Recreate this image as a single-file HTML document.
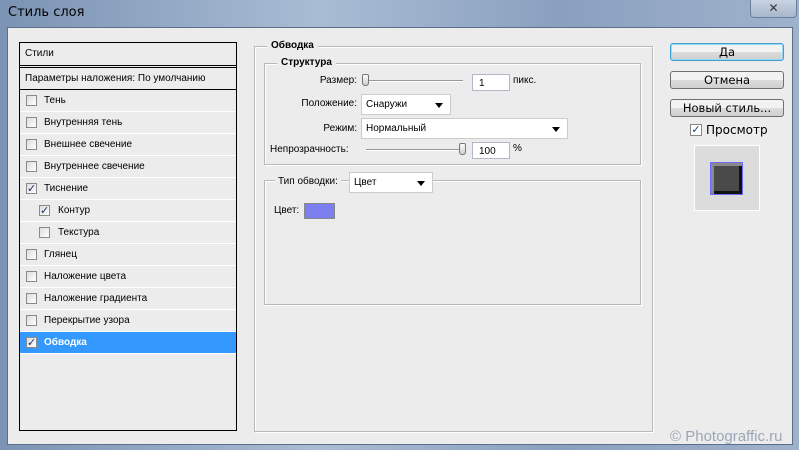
<!DOCTYPE html>
<html><head><meta charset="utf-8"><style>
*{margin:0;padding:0;box-sizing:border-box}
body{width:799px;height:450px;overflow:hidden;position:relative;font-family:"Liberation Sans","DejaVu Sans",sans-serif;font-size:11px;color:#000;background:linear-gradient(90deg,#7b93b4,#a9bcd4 40%,#8aa0bf 70%,#9fb2cc)}
.a{position:absolute}
.title{left:8px;top:5px;font-size:13px;font-family:"DejaVu Sans",sans-serif;color:#000}
.win{left:7px;top:27px;width:786px;height:418px;background:#ececec;border:1px solid #5d6f88}
.list{left:19px;top:42px;width:218px;height:389px;border:1px solid #000;background:#ececec}
.row{position:absolute;left:0;width:216px;height:22px;border-bottom:1px solid #fff;line-height:21px;padding-left:24px;font-size:10px}
.cb{position:absolute;left:6px;top:5px;width:11px;height:11px;border:1px solid #8a8a8a;background:linear-gradient(135deg,#ddd,#fff)}
.cb.k::after{content:"✓";position:absolute;left:0px;top:-5px;font-size:11px;color:#1a2d6a;font-weight:bold}
.grp{border:1px solid #b8b8b8;box-shadow:1px 1px 0 #fff inset,1px 1px 0 #fff}
.lg{position:absolute;background:#ececec;padding:0 4px;font-weight:bold;font-size:10px}
.lbl{position:absolute;font-size:10px;text-align:right}
.inp{position:absolute;background:#fff;border:1px solid #b0b8c8;font-size:10px;padding:3px 6px;line-height:11px}
.dd{position:absolute;background:#fff;border:1px solid #ccc;font-size:10px;padding:0 4px;line-height:20px}
.dd::after{content:"";position:absolute;right:7px;top:8px;border:4px solid transparent;border-top:5px solid #000}
.trk{position:absolute;height:2px;border-top:1px solid #999;border-bottom:1px solid #fff}
.th{position:absolute;width:7px;height:12px;background:linear-gradient(#fff,#ccc);border:1px solid #777;border-radius:2px 2px 3px 3px}
.btn{position:absolute;left:670px;width:114px;height:18px;border:1px solid #707070;border-radius:3px;background:linear-gradient(#f2f2f2 50%,#dcdcdc 50%,#cfcfcf);text-align:center;font-size:11.5px;line-height:16px;font-family:"DejaVu Sans",sans-serif}
</style></head><body>
<div class="a title">Стиль слоя</div>
<div class="a" style="left:750px;top:0;width:47px;height:18px;border:1px solid #6d7f98;border-top:none;border-radius:0 0 4px 4px;background:linear-gradient(#c9d4e2,#a8b7cc);text-align:center;font-size:12px;color:#333;line-height:16px">✕</div>
<div class="a win"></div>
<div class="a list">
<div class="row" style="top:0;padding-left:5px;border-bottom:3px double #000;height:25px">Стили</div>
<div class="row" style="top:25px;padding-left:5px;border-bottom:1px solid #000">Параметры наложения: По умолчанию</div>
<div class="row" style="top:47px"><span class="cb"></span>Тень</div>
<div class="row" style="top:69px"><span class="cb"></span>Внутренняя тень</div>
<div class="row" style="top:91px"><span class="cb"></span>Внешнее свечение</div>
<div class="row" style="top:113px"><span class="cb"></span>Внутреннее свечение</div>
<div class="row" style="top:135px"><span class="cb k"></span>Тиснение</div>
<div class="row" style="top:157px;padding-left:38px"><span class="cb k" style="left:19px"></span>Контур</div>
<div class="row" style="top:179px;padding-left:38px"><span class="cb" style="left:19px"></span>Текстура</div>
<div class="row" style="top:201px"><span class="cb"></span>Глянец</div>
<div class="row" style="top:223px"><span class="cb"></span>Наложение цвета</div>
<div class="row" style="top:245px"><span class="cb"></span>Наложение градиента</div>
<div class="row" style="top:267px"><span class="cb"></span>Перекрытие узора</div>
<div class="row" style="top:289px;background:#3399ff;color:#fff;font-weight:bold"><span class="cb k"></span>Обводка</div>
</div>

<div class="a grp" style="left:254px;top:46px;width:399px;height:386px"></div>
<div class="lg" style="left:267px;top:40px">Обводка</div>
<div class="a grp" style="left:264px;top:63px;width:377px;height:102px"></div>
<div class="lg" style="left:277px;top:57px">Структура</div>
<div class="lbl" style="left:280px;top:75px;width:77px">Размер:</div>
<div class="trk" style="left:366px;top:80px;width:97px"></div>
<div class="th" style="left:362px;top:74px"></div>
<div class="inp" style="left:472px;top:74px;width:38px;height:17px">1</div>
<div class="a" style="left:513px;top:75px;font-size:10px">пикс.</div>
<div class="lbl" style="left:280px;top:98px;width:77px">Положение:</div>
<div class="dd" style="left:361px;top:94px;width:90px;height:21px">Снаружи</div>
<div class="lbl" style="left:280px;top:123px;width:77px">Режим:</div>
<div class="dd" style="left:361px;top:118px;width:207px;height:21px">Нормальный</div>
<div class="lbl" style="left:270px;top:144px;width:87px;text-align:left">Непрозрачность:</div>
<div class="trk" style="left:366px;top:149px;width:97px"></div>
<div class="th" style="left:459px;top:143px"></div>
<div class="inp" style="left:472px;top:142px;width:38px;height:17px">100</div>
<div class="a" style="left:513px;top:143px;font-size:10px">%</div>
<div class="a grp" style="left:264px;top:180px;width:377px;height:125px"></div>
<div class="lbl" style="left:275px;top:176px;background:#ececec;padding:0 3px">Тип обводки:</div>
<div class="dd" style="left:349px;top:172px;width:84px;height:21px">Цвет</div>
<div class="lbl" style="left:274px;top:205px">Цвет:</div>
<div class="a" style="left:304px;top:203px;width:31px;height:16px;background:#7b7ff0;border:1px solid #888"></div>

<div class="btn" style="top:43px;border-color:#3c9fd6;box-shadow:0 0 0 1px #9ad8f4 inset">Да</div>
<div class="btn" style="top:71px">Отмена</div>
<div class="btn" style="top:99px">Новый стиль...</div>
<div class="a" style="left:690px;top:124px;width:12px;height:12px;border:1px solid #888;background:#fff;font-size:11px;line-height:10px;color:#1a3a8a;font-weight:bold;text-align:center">✓</div>
<div class="a" style="left:706px;top:123px;font-size:12px;font-family:'DejaVu Sans',sans-serif">Просмотр</div>
<div class="a" style="left:694px;top:145px;width:66px;height:66px;background:#dcdcdc;border:1px solid #fff"></div>
<div class="a" style="left:710px;top:162px;width:33px;height:33px;background:#4a4a4a;border:1px solid #6a6aff;box-shadow:inset 3px 3px 0 #8a8a8a,inset -3px -3px 0 #111"></div>
<div class="a" style="left:670px;top:428px;font-size:15px;color:#9aa7b8">© Photograffic.ru</div>
</body></html>
